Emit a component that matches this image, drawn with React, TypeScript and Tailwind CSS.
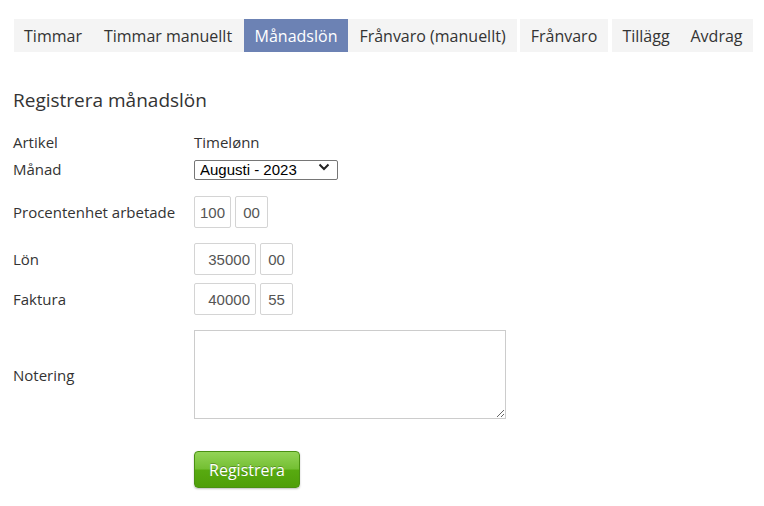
import React from "react";

const tabs = [
  { label: "Timmar", cls: "w-[78px]" },
  { label: "Timmar manuellt", cls: "w-[152px]" },
  { label: "Månadslön", cls: "w-[104px]", active: true },
  { label: "Frånvaro (manuellt)", cls: "w-[169px]" },
  { label: "Frånvaro", cls: "w-[88px] ml-[3px]" },
  { label: "Tillägg", cls: "w-[68px] ml-[4px]" },
  { label: "Avdrag", cls: "w-[73px]" },
];

const Row = ({ label, children, className = "" }: { label: string; children: React.ReactNode; className?: string }) => (
  <div className={`flex items-center ${className}`}>
    <div className="w-[181px] shrink-0 text-[15px] leading-[20px] text-[#333]">{label}</div>
    {children}
  </div>
);

const Box = ({ value, w, align = "text-right" }: { value: string; w: string; align?: string }) => (
  <input
    readOnly
    value={value}
    className={`${w} ${align} h-[32px] border border-[#d4d4d4] rounded-[2px] px-[5px] text-[15px] text-[#555] outline-none`}
    style={{ fontFamily: "'Liberation Sans', Arial, sans-serif" }}
  />
);

export default function App() {
  return (
    <div
      className="w-[764px] h-[506px] bg-white px-[13px] pt-[19px]"
      style={{ fontFamily: "'Open Sans', sans-serif" }}
    >
      <div className="flex ml-[1px]">
        {tabs.map((t) => (
          <div
            key={t.label}
            className={`${t.cls} shrink-0 h-[33px] flex items-center justify-center text-[16px] ${
              t.active ? "bg-[#6c82b4] text-white" : "bg-[#f4f4f4] text-[#333]"
            }`}
          >
            {t.label}
          </div>
        ))}
      </div>

      <h2 className="mt-[35px] text-[19px] leading-[26px] text-[#333]">Registrera månadslön</h2>

      <Row label="Artikel" className="mt-[19px]">
        <span className="text-[15px] leading-[20px] text-[#333]">Timelønn</span>
      </Row>

      <Row label="Månad" className="mt-[5px]">
        <div className="relative">
          <select
            defaultValue="2023-08"
            className="appearance-none w-[144px] h-[20px] border border-[#767676] rounded-[2px] pl-[5px] text-[15px] leading-[18px] text-black bg-white outline-none"
            style={{ fontFamily: "'Liberation Sans', Arial, sans-serif" }}
          >
            <option value="2023-08">Augusti - 2023</option>
          </select>
          <svg className="absolute right-[8px] top-[6px] pointer-events-none" width="12" height="8" viewBox="0 0 12 8">
            <path d="M1.5 1.5 L6 6 L10.5 1.5" fill="none" stroke="#222" strokeWidth="2" />
          </svg>
        </div>
      </Row>

      <Row label="Procentenhet arbetade" className="mt-[15px]">
        <div className="flex gap-[4px]">
          <Box value="100" w="w-[37px]" />
          <Box value="00" w="w-[33px]" align="text-center" />
        </div>
      </Row>

      <Row label="Lön" className="mt-[15px]">
        <div className="flex gap-[4px]">
          <Box value="35000" w="w-[62px]" />
          <Box value="00" w="w-[33px]" align="text-center" />
        </div>
      </Row>

      <Row label="Faktura" className="mt-[8px]">
        <div className="flex gap-[4px]">
          <Box value="40000" w="w-[62px]" />
          <Box value="55" w="w-[33px]" align="text-center" />
        </div>
      </Row>

      <Row label="Notering" className="mt-[15px]">
        <textarea className="w-[312px] h-[89px] border border-[#cccccc] outline-none block" />
      </Row>

      <div className="pl-[181px] mt-[32px]">
        <button
          className="w-[106px] h-[37px] rounded-[4px] border border-[#4a9112] bg-[linear-gradient(to_bottom,#93d456_0%,#74bf33_48%,#58aa10_52%,#4f9f0a_100%)] text-white text-[16px] shadow-[0_1px_2px_rgba(0,0,0,0.25)] [text-shadow:0_-1px_0_rgba(0,0,0,0.25)]"
        >
          Registrera
        </button>
      </div>
    </div>
  );
}
